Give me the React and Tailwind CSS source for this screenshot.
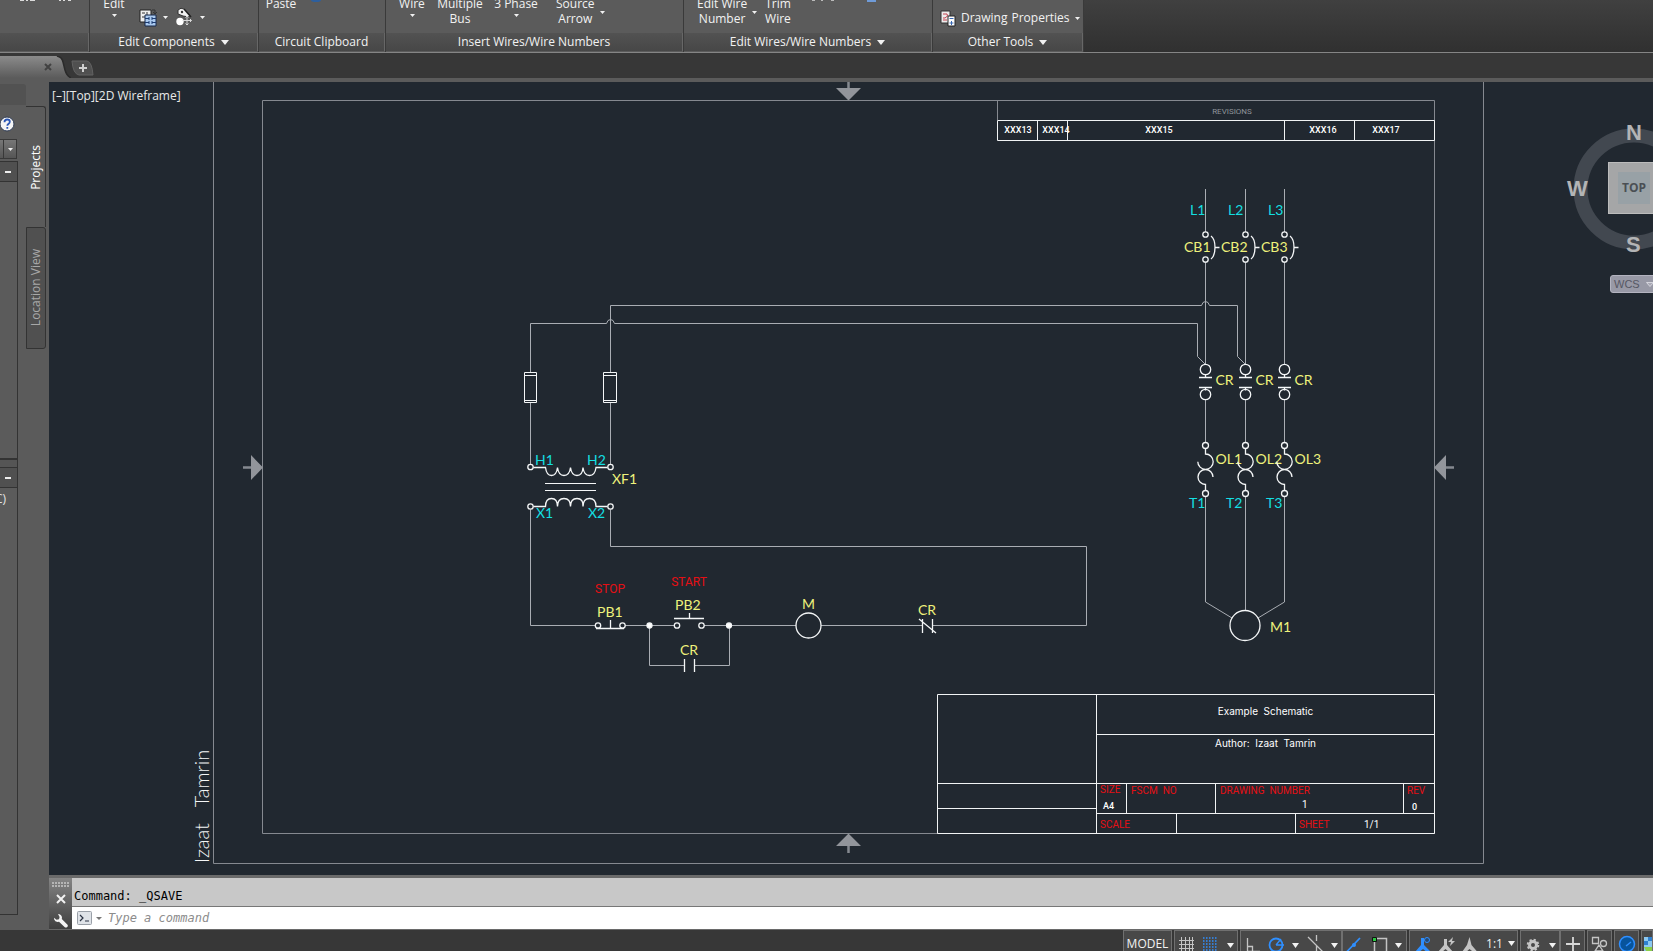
import React from "react";

const UI = "font-['Open_Sans','Noto_Sans',sans-serif]";

function Caret({ big }) {
  return big ? (
    <svg width="8" height="5" viewBox="0 0 8 5" className="shrink-0" aria-hidden="true"><path d="M0 0h8L4 5z" fill="#f2f2f2" /></svg>
  ) : (
    <svg width="5" height="3" viewBox="0 0 5 3" className="shrink-0" aria-hidden="true"><path d="M0 0h5L2.500 3z" fill="#f2f2f2" /></svg>
  );
}

function Panel({ width, title, menu, children }) {
  return (
    <section className={`${width} flex shrink-0 flex-col border-r border-[#3a3a3a] bg-[#5b5b5b]`}>
      <div className="flex h-[33px] items-start overflow-hidden">{children}</div>
      <button className="flex h-[18px] items-center justify-center gap-[6px] whitespace-nowrap border-r border-[#676767] bg-linear-to-b from-[#525252] to-[#474747] text-[12px] leading-[18px]">
        {title && <span>{title}</span>}
        {menu && <Caret big />}
      </button>
    </section>
  );
}

function Tool({ width, lines, caret, side }) {
  return (
    <button className={`${width} -mt-1 flex shrink-0 items-center whitespace-nowrap text-[12px] leading-[15px] ${side ? "flex-row gap-[5px]" : "flex-col"}`}>
      <span className="flex flex-col items-center">
        {lines.map((l) => <span key={l}>{l}</span>)}
      </span>
      {caret && <span className="mt-[3px]"><Caret /></span>}
    </button>
  );
}

function Ribbon() {
  return (
    <header className="flex h-[53px] shrink-0 border-b border-[#858585] bg-linear-to-b from-[#404040] to-[#303030]">
      <Panel width="w-[90px]">
        <svg width="90" height="3" aria-hidden="true">
          <path d="M20 0h4v1h-4zM26 0h2v1h-2zM30 0h5v1h-5zM59 0h2v1h-2zM63 0h2v1h-2zM68 0h3v1h-3z" fill="#dcdcdc" />
        </svg>
      </Panel>
      <Panel width="w-[169px]" title="Edit Components" menu>
        <div className="w-[10px]" />
        <Tool width="w-[28px]" lines={["Edit"]} caret />
        <div className="flex items-center gap-[6px] pl-[11px]">
          <button className="mt-[7px] flex items-center gap-[6px]" aria-label="Copy component">
            <svg width="18" height="20" viewBox="0 0 18 20">
              <path d="M1 3h11v12H1z" fill="#eee" stroke="#222" />
              <path d="M3 6h3m-3 4h3M8 5v8M13 3h3v4m-2-2 2 2 2-2" stroke="#333" fill="none" />
              <path d="M6 8h11v11H6z" fill="#a9c9ef" stroke="#16284a" />
              <path d="M6 11.500h4m3 0h4M6 15.500h4m3 0h4M10 10v3m3-3v3m-3 1v3m3-3v3" stroke="#1d3c73" />
            </svg>
            <Caret />
          </button>
          <button className="mt-[7px] flex items-center gap-[6px]" aria-label="Move component">
            <svg width="20" height="20" viewBox="0 0 20 20">
              <path d="M4 7V3q3-3 6-1l6 6-1 2-6-1z" fill="#f3f3f3" stroke="#333" />
              <path d="m10 2 7 8" stroke="#222" strokeWidth="1.500" />
              <circle cx="8" cy="5" r="1.200" fill="#333" />
              <circle cx="6" cy="14.500" r="3.700" fill="#fff" />
              <path d="M13 9v9M8.500 13.500h9M11.500 10.500 13 9l1.500 1.500M11.500 16.500 13 18l1.500-1.500M16 12l1.500 1.500L16 15" stroke="#d8d8d8" fill="none" />
            </svg>
            <Caret />
          </button>
        </div>
      </Panel>
      <Panel width="w-[127px]" title="Circuit Clipboard">
        <div className="w-[6px]" />
        <Tool width="w-[32px]" lines={["Paste"]} />
        <svg width="30" height="3" className="ml-[10px]" aria-hidden="true"><ellipse cx="9" cy="0" rx="5" ry="2" fill="#2d5f9e" /></svg>
      </Panel>
      <Panel width="w-[298px]" title="Insert Wires/Wire Numbers">
        <div className="w-[8px]" />
        <Tool width="w-[36px]" lines={["Wire"]} caret />
        <Tool width="w-[60px]" lines={["Multiple", "Bus"]} />
        <Tool width="w-[52px]" lines={["3 Phase"]} caret />
        <div className="w-[14px]" />
        <Tool width="w-[50px]" lines={["Source", "Arrow"]} caret side />
      </Panel>
      <Panel width="w-[249px]" title="Edit Wires/Wire Numbers" menu>
        <div className="w-[13px]" />
        <Tool width="w-[68px]" lines={["Edit Wire", "Number"]} caret side />
        <Tool width="w-[26px]" lines={["Trim", "Wire"]} />
        <svg width="80" height="3" className="ml-[18px]" aria-hidden="true"><path d="M3 0h3v1H3zM12 0h2v1h-2zM22 0h3v1h-3z" fill="#bbb" /><path d="M58 0h9v2h-9z" fill="#6f9bd8" /></svg>
      </Panel>
      <Panel width="w-[151px]" title="Other Tools" menu>
        <button className="flex items-center gap-[5px] whitespace-nowrap pl-[7px] pt-[9px] text-[12px] leading-[18px]">
          <svg width="16" height="18" viewBox="0 0 16 18" aria-hidden="true">
            <path d="M1 2h9v12H1z" fill="#ececec" stroke="#333" />
            <path d="M3 5h4q2 2-2 4H3m0 2h4" stroke="#c4424f" fill="none" />
            <path d="M8 7h7v10H8z" fill="#fff" stroke="#222" />
            <path d="M9.500 9.500h4M9.500 14h4m-2-2v4" stroke="#3768b5" />
          </svg>
          <span className="flex gap-[4px]"><span>Drawing</span><span>Properties</span></span>
          <Caret />
        </button>
      </Panel>
    </header>
  );
}

function FileTabs() {
  return (
    <nav className="flex h-[29px] shrink-0 items-end border-b-4 border-[#5b5b5b] bg-[#373737]" aria-label="Open drawings">
      <div className="grid">
        <svg width="71" height="22" viewBox="0 0 71 22" className="col-start-1 row-start-1" aria-hidden="true">
          <defs><linearGradient id="tab" x1="0" y1="0" x2="0" y2="1"><stop offset="0" stopColor="#8b8b8b" /><stop offset="1" stopColor="#5b5b5b" /></linearGradient></defs>
          <path d="M0 0h56q6 0 7 6l2 8q2 7 6 8H0z" fill="url(#tab)" />
          <path d="M57 0q5 1 6 6l2 8q2 7 7 8" fill="none" stroke="#2a2a2a" strokeWidth="1.500" />
        </svg>
        <button className="col-start-1 row-start-1 flex items-center pl-[44px]" aria-label="Close drawing">
          <svg width="8" height="8" viewBox="0 0 8 8"><path d="m1 1 6 6m0-6L1 7" stroke="#424242" strokeWidth="2" /></svg>
        </button>
      </div>
      <button aria-label="New drawing" className="mb-[2px]">
        <svg width="23" height="16" viewBox="0 0 23 16">
          <path d="M1 1h15q5 1 6 14H8Q2 14 1 1z" fill="#505050" stroke="#626262" />
          <path d="M12 4v8M8 8h8" stroke="#cfcfcf" strokeWidth="2" />
        </svg>
      </button>
    </nav>
  );
}

function SectionBar({ label }) {
  return (
    <button aria-label={label} className="flex h-[21px] w-full shrink-0 items-center justify-end border-y border-r border-[#333] bg-[#505050] pr-[6px]">
      <span className="h-[2px] w-[6px] bg-[#eee]" />
    </button>
  );
}

function Palette() {
  return (
    <aside className="flex w-[49px] shrink-0 bg-[#5b5b5b]">
      <div className="flex w-[18px] flex-col pb-[15px]">
        <div className="mt-[2px] h-[21px] w-[26px] shrink-0 rounded-tr-[3px] bg-[#525252]" />
        <button className="mt-[11px] h-[16px] w-[15px] shrink-0" aria-label="Help">
          <svg width="15" height="16" viewBox="0 0 15 16">
            <circle cx="7" cy="8" r="7" fill="#f4f4f4" stroke="#2f3c55" />
            <path d="M4.500 6.200q0-2.700 2.700-2.700 2.600 0 2.600 2.300 0 1.300-1.300 2.100-1.200.7-1.200 1.800m0 1.400v1.700" fill="none" stroke="#2b56b5" strokeWidth="1.800" />
          </svg>
        </button>
        <button aria-label="Project list" className="mt-[7px] flex h-[20px] w-[17px] shrink-0 items-center justify-end border border-l-0 border-[#383838] bg-linear-to-b from-[#777] to-[#555]">
          <span className="flex h-full w-[13px] items-center justify-center border-l border-[#383838]"><Caret /></span>
        </button>
        <div className="h-[2px] shrink-0" />
        <SectionBar label="Collapse projects" />
        <div className="h-[276px] shrink-0 border-r border-[#333]" />
        <div className="h-[9px] shrink-0 border-t-2 border-r border-[#333] bg-[#555]" />
        <SectionBar label="Collapse details" />
        <div className="flex-1 border-r border-b border-[#333] pt-[2px] text-[12px] leading-[18px] text-[#e4e4e4]"><span className="-ml-[5px]">C)</span></div>
      </div>
      <div className="ml-[8px] mt-[24px] flex w-[20px] flex-col text-[12px]" role="tablist">
        <button role="tab" aria-selected="true" className="flex h-[121px] items-center justify-center rounded-tr-[3px] border-t border-r border-[#333] text-white">
          <span className="rotate-180 [writing-mode:vertical-rl]">Projects</span>
        </button>
        <button role="tab" aria-selected="false" className="flex h-[122px] items-center justify-center rounded-r-[3px] border border-[#333] bg-[#505050] text-[#a8a8a8]">
          <span className="rotate-180 whitespace-nowrap [writing-mode:vertical-rl]">Location View</span>
        </button>
      </div>
    </aside>
  );
}

const W = "#a9adb3";

function T({ x, y, c = "#eef27c", s = 14, children, w = 400, f = "Lato, sans-serif", a }) {
  return <text x={x} y={y} fill={c} fontSize={s} fontWeight={w} fontFamily={f} textAnchor={a} style={{ whiteSpace: "pre" }}>{children}</text>;
}

const CY = "#14dfe2";
const RED = "#e60f14";

function Phase({ x, n, labelX, cbX, tX }) {
  return (
    <g>
      <path d={`M${x} 189V232M${x} 262V364M${x} 400V442M${x} 496V602`} stroke={W} />
      <g stroke="#f4f6f7" strokeWidth="1.300">
        <circle cx={x} cy="234.500" r="2.700" /><circle cx={x} cy="259.500" r="2.700" />
        <path d={`M${x + 5.5} 236q4 3 4 11.500t-4 11.500M${x + 9.500} 247.500h4.500`} />
        <circle cx={x} cy="369.500" r="5.200" /><circle cx={x} cy="394.500" r="5.200" />
        <path d={`M${x - 6.500} 377.500h13M${x - 6.500} 387.500h13M${x} 374.500v3M${x} 387.500v3`} />
        <circle cx={x} cy="445.500" r="3" /><circle cx={x} cy="493.500" r="3" />
        <path d={`M${x} 448.500v5.500a7.700 7.700 0 1 1 -7.700 7.700M${x + 7.500} 477a7.500 7.500 0 1 0 -7.500 7.500v6`} />
      </g>
      <T x={labelX} y="215" c={CY}>{`L${n}`}</T>
      <T x={cbX} y="252">{`CB${n}`}</T>
      <T x={x + 10} y="385">CR</T>
      <T x={x + 10} y="464">{`OL${n}`}</T>
      <T x={tX} y="508" c={CY}>{`T${n}`}</T>
    </g>
  );
}

function Schematic() {
  const tb = "Roboto, sans-serif";
  const wide = "Inter, sans-serif";
  return (
    <svg viewBox="49 82 1604 793" preserveAspectRatio="xMinYMin meet" className="block h-full w-full" fill="none" role="img" aria-label="Example Schematic">
      <g stroke="#858990">
        <path d="M213.500 82V863.500H1483.500V82M262.500 100.500H1434.500V833.500H262.500zM997.500 100.500V120" />
        <path d="M848.500 82v8M243 467.500h9M1454 467.500h-9M848.500 853v-8" strokeWidth="2.500" />
      </g>
      <path d="M836 88h25l-12.500 12.500zM251 455v25l12-12.500zM1446 455v25l-12-12.500zM836 846h25l-12.500-12.500z" fill="#92959b" />

      <g stroke="#f1f3f4">
        <path d="M997.500 120.500H1434.500V140.500H997.500zM1037.500 120v20M1067.500 120v20M1284.500 120v20M1354.500 120v20" />
        <path d="M937.500 694.500H1434.500V833.500H937.500zM1096.500 694V833M1096 734.500H1434M937 783.500H1434M937 808.500H1096M1096 813.500H1434M1126.500 783v30M1215.500 783v30M1403.500 783v30M1176.500 813v20M1295.500 813v20" />
      </g>
      <T x="1232" y="114" c="#8f939a" s={8} f={tb} a="middle">REVISIONS</T>
      <T x="1018" y="133" c="#fff" s={9} w={500} f={tb} a="middle">XXX13</T>
      <T x="1056" y="133" c="#fff" s={9} w={500} f={tb} a="middle">XXX14</T>
      <T x="1159" y="133" c="#fff" s={9} w={500} f={tb} a="middle">XXX15</T>
      <T x="1323" y="133" c="#fff" s={9} w={500} f={tb} a="middle">XXX16</T>
      <T x="1386" y="133" c="#fff" s={9} w={500} f={tb} a="middle">XXX17</T>

      <g stroke={W}>
        <path d="M610.500 372V305.500H1201.500q1-4 4-4t4 4H1237.500V356.500L1245 364" />
        <path d="M530.500 372V323.500H606.500q1-4 4-4t4 4H1197.500V356.500L1205 364" />
        <path d="M530.500 403V464M610.500 403V464M530.500 509.500V625.500H595M610.500 509.500V546.500H1086.500V625.500H933" />
        <path d="M625 625.500H674M704 625.500H796M821 625.500H922M649.500 625.500V665.500H684M729.500 625.500V665.500H695" />
        <path d="M1205.500 602 1232 618M1284.500 602 1258 618M1245.500 600v11" />
      </g>
      <g stroke="#f4f6f7" strokeWidth="1.300">
        <path d="M524.500 372.500h12v30h-12zM524.500 375.500h12M524.500 400.500h12M603.500 372.500h13v30h-13zM603.500 375.500h13M603.500 400.500h13" strokeWidth="1" />
        <path d="M533.500 467.500H545.500q1 8 6 8t6-8q1 8 6.500 8t6.500-8q1 8 6.500 8t6-8q1 8 6.500 8t6.500-8H607.500" />
        <path d="M533.500 506.500H545.500q0-8 6-8t6 8q0-8 6.500-8t6.500 8q0-8 6.500-8t6 8q0-8 6.500-8t6.500 8H607.500" />
        <path d="M545 483.500h51M545 490.500h51" strokeWidth="1" />
        <circle cx="530.500" cy="467" r="2.700" /><circle cx="610.500" cy="467" r="2.700" />
        <circle cx="530.500" cy="506.500" r="2.700" /><circle cx="610.500" cy="506.500" r="2.700" />
        <circle cx="598" cy="625.500" r="2.700" /><circle cx="622.500" cy="625.500" r="2.700" />
        <path d="M596 628.500h28M610.500 620v8M674 618.500h30M689.500 613v5M684.500 659v13M694.500 659v13M922.500 619v14M932.500 619v14M919 619l17 14" />
        <circle cx="677" cy="625.500" r="2.700" /><circle cx="701.500" cy="625.500" r="2.700" />
        <circle cx="649.500" cy="625.500" r="2.500" fill="#fff" /><circle cx="729" cy="625.500" r="2.500" fill="#fff" />
        <circle cx="808.500" cy="625.500" r="12.500" />
        <circle cx="1245" cy="625.500" r="15" />
      </g>

      <Phase x={1205.5} n={1} labelX={1190} cbX={1184} tX={1189} />
      <Phase x={1245.5} n={2} labelX={1228} cbX={1221} tX={1226} />
      <Phase x={1284.5} n={3} labelX={1268} cbX={1261} tX={1266} />

      <T x="535" y="465" c={CY}>H1</T>
      <T x="587" y="465" c={CY}>H2</T>
      <T x="536" y="518" c={CY}>X1</T>
      <T x="588" y="518" c={CY}>X2</T>
      <T x="612" y="484">XF1</T>
      <T x="610" y="593" c={RED} s={12} f={tb} a="middle">STOP</T>
      <T x="689" y="586" c={RED} s={12} f={tb} a="middle">START</T>
      <T x="597" y="617">PB1</T>
      <T x="675" y="610">PB2</T>
      <T x="680" y="655">CR</T>
      <T x="808.500" y="609" a="middle">M</T>
      <T x="918" y="615">CR</T>
      <T x="1270" y="632">M1</T>

      <T x="1265.500" y="715" c="#fff" s={10} f={wide} a="middle">{"Example  Schematic"}</T>
      <T x="1265.500" y="747" c="#fff" s={10} f={wide} a="middle">{"Author:  Izaat  Tamrin"}</T>
      <T x="1100" y="793" c={RED} s={10} f={tb}>SIZE</T>
      <T x="1131" y="794" c={RED} s={10} f={tb}>{"FSCM  NO"}</T>
      <T x="1220" y="794" c={RED} s={10} f={tb}>{"DRAWING  NUMBER"}</T>
      <T x="1407" y="794" c={RED} s={10} f={tb}>REV</T>
      <T x="1103" y="809" c="#fff" s={9} w={500} f={tb}>A4</T>
      <T x="1302" y="808" c="#fff" s={10} f={tb}>1</T>
      <T x="1412" y="810" c="#fff" s={9} w={500} f={tb}>0</T>
      <T x="1100" y="828" c={RED} s={10} f={tb}>SCALE</T>
      <T x="1299" y="828" c={RED} s={10} f={tb}>SHEET</T>
      <T x="1364" y="828" c="#fff" s={10} f={tb}>1/1</T>
      <g transform="translate(209 863) rotate(-90)"><T x="0" y="0" c="#f4f6f7" s={20} w={300}>{"Izaat   Tamrin"}</T></g>
    </svg>
  );
}

function ViewCube() {
  const dir = "absolute font-['Liberation_Sans',sans-serif] text-[22px] font-bold leading-[22px] text-[#b3b4b5]";
  return (
    <div className="absolute right-[-51px] top-[37px] h-[176px] w-[140px]">
      <svg width="140" height="140" viewBox="0 0 140 140" className="absolute left-0 top-0" aria-hidden="true">
        <circle cx="70" cy="70" r="53.500" fill="none" stroke="#424850" strokeWidth="14" />
      </svg>
      <button className={`${dir} left-[62px] top-[3px]`}>N</button>
      <button className={`${dir} left-[3px] top-[59px]`}>W</button>
      <button className={`${dir} left-[62px] top-[115px]`}>S</button>
      <button className="absolute left-[44px] top-[43px] flex h-[52px] w-[52px] items-center justify-center border border-[#bcbcbc] bg-[#a5a6a7]">
        <span className="flex h-[32px] w-[32px] items-center justify-center bg-[#98a1a6] font-['Open_Sans',sans-serif] text-[12px] font-bold text-[#4a4f54]">TOP</span>
      </button>
      <button className="absolute left-[46px] top-[156px] flex h-[18px] w-[56px] items-center gap-[6px] rounded-[3px] border border-[#b4b4c0] bg-[#9899a6] pl-[3px] font-['Liberation_Sans',sans-serif] text-[11px] text-[#565763]">
        WCS
        <svg width="8" height="5" viewBox="0 0 8 5" aria-hidden="true"><path d="M.5.5h7L4 4.500z" fill="#a9a9b5" stroke="#d5d5dd" /></svg>
      </button>
    </div>
  );
}

function CommandLine() {
  return (
    <section className="flex h-[55px] shrink-0 border-t-3 border-b border-[#6a6a6a] font-['DejaVu_Sans_Mono',monospace] text-[12px]">
      <div className="flex w-[23px] shrink-0 flex-col items-center bg-linear-to-b from-[#858585] to-[#404040] pt-[4px]">
        <svg width="18" height="6" viewBox="0 0 18 6" aria-hidden="true"><path d="M0 1h18M0 4h18" stroke="#b5b5b5" strokeWidth="2" strokeDasharray="2 1" /></svg>
        <button aria-label="Close" className="mt-[6px]"><svg width="10" height="10" viewBox="0 0 10 10"><path d="m1 1 8 8m0-8L1 9" stroke="#f2f2f2" strokeWidth="2" /></svg></button>
        <button aria-label="Customize" className="mt-[10px]">
          <svg width="14" height="14" viewBox="0 0 14 14"><path d="M4 0Q7.500 0 8 3.500L7.800 5l5.700 5.700q.8 1.300-.3 2.300t-2.400.3L5 7.800Q1 8.500.2 5.500L0 3.800l2.500 2L5 5.200 5.600 3z" fill="#f4f4f4" /></svg>
        </button>
      </div>
      <div className="flex min-w-0 flex-1 flex-col">
        <output className="block h-[29px] border-b border-[#777] bg-[#c8c8c8] pl-[2px] pt-[10px] leading-[16px] text-black">Command: _QSAVE</output>
        <div className="flex h-[22px] items-center bg-white pl-[5px]">
          <button aria-label="Recent commands" className="flex items-center gap-[4px]">
            <svg width="15" height="14" viewBox="0 0 15 14"><rect x=".5" y=".5" width="14" height="13" rx="1" fill="#dfe3e8" stroke="#9aa0a8" /><path d="m3 4 3 3-3 3m5 0h4" stroke="#2c3444" fill="none" strokeWidth="1.200" /></svg>
            <svg width="6" height="3" viewBox="0 0 6 3"><path d="M0 0h6L3 3z" fill="#777" /></svg>
          </button>
          <input aria-label="Command" placeholder="Type a command" className="ml-[6px] min-w-0 flex-1 bg-transparent italic outline-none placeholder:text-[#8c8c8c]" />
        </div>
      </div>
    </section>
  );
}

function Cell({ label, width, children, gap }) {
  return <button aria-label={label} className={`${width} ${gap ? "ml-[2px]" : ""} flex h-[27px] shrink-0 items-center justify-center border border-[#707070] bg-[#484848]`}>{children}</button>;
}

const G = "#c4c4c4";
const B = "#2f8fff";

function StatusBar() {
  return (
    <footer className="flex h-[21px] shrink-0 items-start justify-end overflow-hidden bg-[#373737]">
      <button className="h-[27px] w-[49px] shrink-0 border border-[#707070] bg-[#484848] text-[12px] leading-[25px]">MODEL</button>
      <Cell label="Grid and snap" width="w-[64px]" gap>
        <svg width="62" height="24" viewBox="0 0 62 24">
          <path d="M6.500 5v16M10.500 5v16M14.500 5v16M4 8.500h15M4 12.500h15M4 16.500h15M17.500 5v16" stroke={G} />
          <path d="M28 6h15M28 9h15M28 12h15M28 15h15M28 18h15M28 21h15" stroke={B} strokeWidth="1.500" strokeDasharray="1.500 1.500" />
          <path d="M52 11h7l-3.500 5z" fill="#f2f2f2" />
        </svg>
      </Cell>
      <Cell label="Ortho and polar tracking" width="w-[102px]" gap>
        <svg width="100" height="24" viewBox="0 0 100 24">
          <path d="M6.500 6v13.500H19M6.500 14.500h5v5" fill="none" stroke={G} strokeWidth="1.300" />
          <circle cx="35" cy="13" r="6.500" fill="none" stroke={B} strokeWidth="1.800" /><path d="M35 13h8M35 13l5-6" stroke={B} strokeWidth="1.300" />
          <path d="M51 11h7l-3.500 5zM90 11h7l-3.500 5z" fill="#f2f2f2" />
          <path d="M67 5l17 17M75.500 3v6m0 5v9" stroke={G} strokeWidth="1.300" />
        </svg>
      </Cell>
      <Cell label="Object snap" width="w-[65px]">
        <svg width="63" height="24" viewBox="0 0 63 24">
          <path d="M4 20h15M4 19.500 17 6" stroke={B} strokeWidth="1.800" fill="none" /><circle cx="11" cy="13" r="2" fill={B} />
          <path d="M31.500 6.500h12v14h-12z" fill="none" stroke={G} strokeWidth="1.500" /><path d="M29.500 5.500h4v4h-4z" fill="#29c940" stroke="#111" />
          <path d="M52 11h7l-3.500 5z" fill="#f2f2f2" />
        </svg>
      </Cell>
      <Cell label="Annotation scale" width="w-[109px]" gap>
        <svg width="74" height="24" viewBox="2 0 74 24">
          <path d="M11 6h3v7l7 7-3 1-5-4-5 4-3-1 6-7z" fill={B} /><circle cx="17" cy="8" r="2.500" fill="#28496f" stroke={B} />
          <path d="M34 7h3v6l6 7-3 1-4.500-4-4.500 4-3-1 6-7zM38 10l5-5-1 4h3l-5 5 1-4z" fill={G} />
          <path d="M59.500 5l2 8 6 7-3 1-5-4-4.500 4-3-1 5-7z" fill={G} />
        </svg>
        <span className="flex items-center gap-[5px] text-[12px]">1:1<svg width="7" height="5"><path d="M0 0h7L3.500 5z" fill="#f2f2f2" /></svg></span>
      </Cell>
      <Cell label="Workspace" width="w-[40px]" gap>
        <svg width="38" height="24" viewBox="0 0 38 24">
          <circle cx="12" cy="13" r="3.500" fill="none" stroke={G} strokeWidth="3" /><circle cx="12" cy="13" r="5.300" fill="none" stroke={G} strokeWidth="2" strokeDasharray="2.200 1.960" />
          <path d="M28 11h7l-3.500 5z" fill="#f2f2f2" />
        </svg>
      </Cell>
      <Cell label="Annotation monitor" width="w-[25px]"><svg width="16" height="20" viewBox="0 0 16 20"><path d="M8 3v14M1 10h14" stroke="#d8d8d8" strokeWidth="1.800" /></svg></Cell>
      <Cell label="Isolate objects" width="w-[25px]" gap>
        <svg width="17" height="20" viewBox="0 0 17 20" fill="none" stroke={G} strokeWidth="1.300"><path d="M1.500 3.500h6v6h-6zM8 11l4 6H4z" /><circle cx="12.500" cy="9.500" r="3" /></svg>
      </Cell>
      <Cell label="Hardware acceleration" width="w-[25px]" gap><svg width="18" height="20" viewBox="0 0 18 20"><circle cx="9" cy="10" r="7.500" fill="#07549c" stroke={B} strokeWidth="1.500" /><path d="m8 12 5-4" stroke={B} strokeWidth="1.500" /></svg></Cell>
      <Cell label="Clean screen" width="w-[12px]" gap><svg width="10" height="22" viewBox="0 0 10 22"><path d="M2 4h8v16H2z" fill="#8cc8f0" /><path d="M2 8h4v4H2zM6 4h4v4H6z" fill="#2f80d0" /><path d="M2 14h8v6H5z" fill="#8bcf4a" /></svg></Cell>
    </footer>
  );
}

export default function App() {
  return (
    <div className={`${UI} flex h-screen min-h-0 flex-col overflow-hidden bg-[#373737] text-[#f2f2f2]`}>
      <Ribbon />
      <FileTabs />
      <div className="flex min-h-0 flex-1">
        <Palette />
        <main className="flex min-w-0 flex-1 flex-col">
          <div className="relative min-h-0 flex-1 overflow-hidden bg-[#212830]">
            <Schematic />
            <button className="absolute left-[3px] top-[5px] whitespace-nowrap text-[12px] leading-[18px] text-[#e8e8e8]">[–][Top][2D Wireframe]</button>
            <ViewCube />
          </div>
          <CommandLine />
        </main>
      </div>
      <StatusBar />
    </div>
  );
}
